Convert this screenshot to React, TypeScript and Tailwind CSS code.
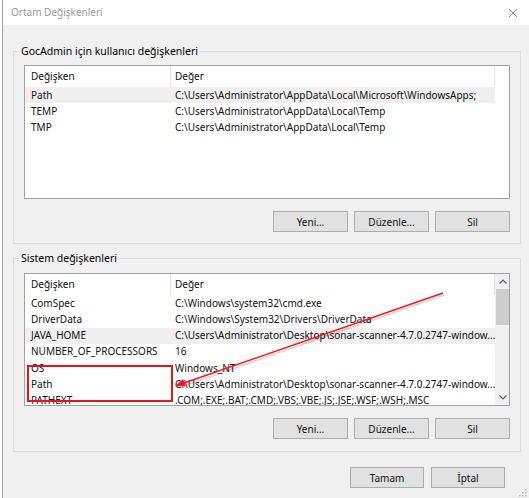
import type { FC } from "react";

type Row = { name: string; value: string; selected?: boolean };

const userRows: Row[] = [
  { name: "Path", value: "C:\\Users\\Administrator\\AppData\\Local\\Microsoft\\WindowsApps;", selected: true },
  { name: "TEMP", value: "C:\\Users\\Administrator\\AppData\\Local\\Temp" },
  { name: "TMP", value: "C:\\Users\\Administrator\\AppData\\Local\\Temp" },
];

const systemRows: Row[] = [
  { name: "ComSpec", value: "C:\\Windows\\system32\\cmd.exe" },
  { name: "DriverData", value: "C:\\Windows\\System32\\Drivers\\DriverData" },
  { name: "JAVA_HOME", value: "C:\\Users\\Administrator\\Desktop\\sonar-scanner-4.7.0.2747-window...", selected: true },
  { name: "NUMBER_OF_PROCESSORS", value: "16" },
  { name: "OS", value: "Windows_NT" },
  { name: "Path", value: "C:\\Users\\Administrator\\Desktop\\sonar-scanner-4.7.0.2747-window..." },
  { name: "PATHEXT", value: ".COM;.EXE;.BAT;.CMD;.VBS;.VBE;.JS;.JSE;.WSF;.WSH;.MSC" },
];

const WinButton: FC<{ label: string; width?: string }> = ({ label, width = "w-[75px]" }) => (
  <button
    type="button"
    className={`h-[21px] border border-[#adadad] bg-[#e1e1e1] text-[10px] leading-none text-[#111] ${width}`}
  >
    {label}
  </button>
);

const VarList: FC<{ rows: Row[]; scroll?: boolean; height: string }> = ({ rows, scroll, height }) => (
  <div className={`flex w-[486px] overflow-hidden border border-[#a0a0a8] bg-white ${height}`}>
    <div className="w-[470px] shrink-0">
      <div className="grid h-[21px] grid-cols-[146px_324px] items-center">
        <div className="flex h-full items-center border-r border-[#e5e5e5] pl-[6px]">Değişken</div>
        <div className="flex h-full items-center border-r border-[#e5e5e5] pl-[4px]">Değer</div>
      </div>
      {rows.map((row) => (
        <div
          key={row.name + row.value}
          className={`grid h-[16.25px] grid-cols-[146px_324px] items-center whitespace-nowrap ${
            row.selected ? "bg-[#efefef]" : ""
          }`}
        >
          <div className="overflow-hidden pl-[6px]">{row.name}</div>
          <div className="overflow-hidden pl-[4px]">{row.value}</div>
        </div>
      ))}
    </div>
    {scroll && (
      <div className="flex w-[15px] shrink-0 flex-col bg-[#f0f0f0]">
        <div className="flex h-[15px] items-center justify-center">
          <svg width="8" height="5" viewBox="0 0 8 5">
            <path d="M0.5 4.5 L4 1 L7.5 4.5" fill="none" stroke="#606060" strokeWidth="1.2" />
          </svg>
        </div>
        <div className="mx-[1px] h-[36px] bg-[#cdcdcd]" />
        <div className="flex-1" />
        <div className="flex h-[15px] items-center justify-center">
          <svg width="8" height="5" viewBox="0 0 8 5">
            <path d="M0.5 0.5 L4 4 L7.5 0.5" fill="none" stroke="#606060" strokeWidth="1.2" />
          </svg>
        </div>
      </div>
    )}
  </div>
);

const GroupBox: FC<{ title: string; rows: Row[]; scroll?: boolean; className: string; listHeight: string }> = ({
  title,
  rows,
  scroll,
  className,
  listHeight,
}) => (
  <fieldset className={`ml-[10px] w-[508px] border border-[#dcdcdc] px-[10px] ${className}`}>
    <legend className="-ml-[5px] px-[2px] text-[10.5px] leading-[16px] text-black">{title}</legend>
    <VarList rows={rows} scroll={scroll} height={listHeight} />
    <div className="mt-[12px] flex justify-end gap-[6px]">
      <WinButton label="Yeni..." />
      <WinButton label="Düzenle..." />
      <WinButton label="Sil" />
    </div>
  </fieldset>
);

export default function App() {
  return (
    <div className="relative h-[498px] w-[529px] overflow-hidden bg-white pl-[2px] font-['Noto_Sans','Segoe_UI',sans-serif] text-[10px] text-[#111]">
      <div className="flex h-full flex-col border-l border-[#a0a0a0]">
        <div className="flex h-[25px] shrink-0 items-center justify-between bg-white pl-[8px] pr-[11px]">
          <span className="text-[10px] text-[#9a9a9a]">Ortam Değişkenleri</span>
          <svg width="10" height="10" viewBox="0 0 10 10">
            <path d="M1 1 L9 9 M9 1 L1 9" stroke="#8a8a8a" strokeWidth="1" />
          </svg>
        </div>

        <div className="flex flex-1 flex-col bg-[#f0f0f0]">
          <GroupBox
            title="GocAdmin için kullanıcı değişkenleri"
            rows={userRows}
            className="mt-[18px] pt-[6px] pb-[11px]"
            listHeight="h-[134px]"
          />
          <GroupBox
            title="Sistem değişkenleri"
            rows={systemRows}
            scroll
            className="mt-[6px] pt-[7px] pb-[12px]"
            listHeight="h-[133px]"
          />

          <div className="mt-[15px] mr-[24px] flex justify-end gap-[7px]">
            <WinButton label="Tamam" width="w-[74px]" />
            <WinButton label="İptal" width="w-[74px]" />
          </div>
        </div>
      </div>

      {/* red annotation drawn over the dialog */}
      <svg className="pointer-events-none absolute inset-0" width="529" height="498" viewBox="0 0 529 498">
        <line x1="444" y1="295" x2="186" y2="385" stroke="rgba(0,0,0,0.15)" strokeWidth="2" />
        <rect x="28" y="366" width="144" height="35" fill="none" stroke="#e8141b" strokeWidth="2" />
        <line x1="443" y1="293" x2="184" y2="383" stroke="#f01818" strokeWidth="1.4" />
        <polygon points="175,386 185.8,386.5 183.1,378.9" fill="#f01818" />
        <g fill="#b8b8b8">
          <rect x="525" y="489" width="1.5" height="1.5" />
          <rect x="522" y="492" width="1.5" height="1.5" />
          <rect x="525" y="492" width="1.5" height="1.5" />
          <rect x="519" y="495" width="1.5" height="1.5" />
          <rect x="522" y="495" width="1.5" height="1.5" />
          <rect x="525" y="495" width="1.5" height="1.5" />
        </g>
      </svg>
    </div>
  );
}
